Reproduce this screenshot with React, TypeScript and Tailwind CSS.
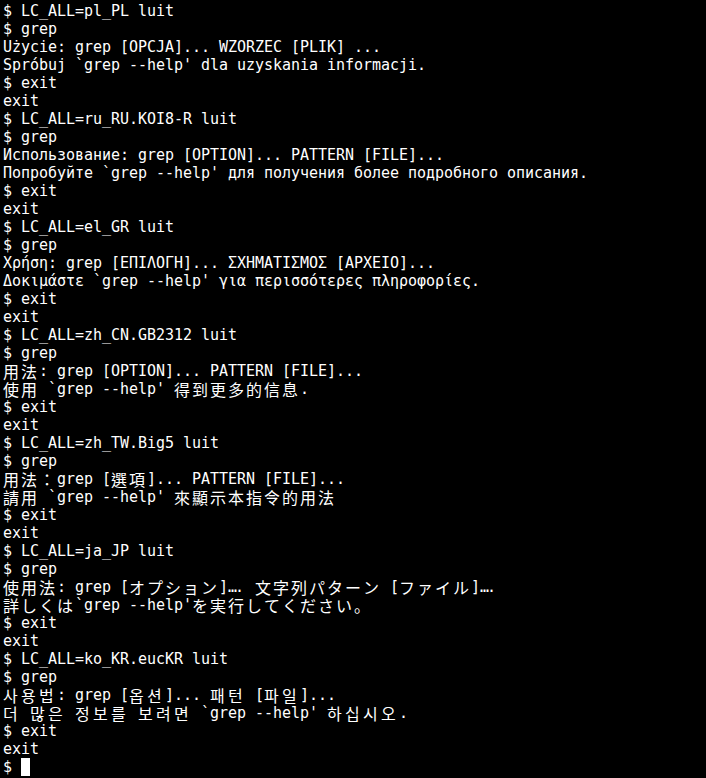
import { Fragment } from 'react';

type Lang = 'latin' | 'sc' | 'tc' | 'ja' | 'ko';

interface Line {
  text: string;
  lang?: Lang;
  cursor?: boolean;
}

const LINES: Line[] = [
  { text: '$ LC_ALL=pl_PL luit' },
  { text: '$ grep' },
  { text: 'Użycie: grep [OPCJA]... WZORZEC [PLIK] ...' },
  { text: "Spróbuj `grep --help' dla uzyskania informacji." },
  { text: '$ exit' },
  { text: 'exit' },
  { text: '$ LC_ALL=ru_RU.KOI8-R luit' },
  { text: '$ grep' },
  { text: 'Использование: grep [OPTION]... PATTERN [FILE]...' },
  { text: "Попробуйте `grep --help' для получения более подробного описания." },
  { text: '$ exit' },
  { text: 'exit' },
  { text: '$ LC_ALL=el_GR luit' },
  { text: '$ grep' },
  { text: 'Χρήση: grep [ΕΠΙΛΟΓΗ]... ΣΧΗΜΑΤΙΣΜΟΣ [ΑΡΧΕΙΟ]...' },
  { text: "Δοκιμάστε `grep --help' για περισσότερες πληροφορίες." },
  { text: '$ exit' },
  { text: 'exit' },
  { text: '$ LC_ALL=zh_CN.GB2312 luit' },
  { text: '$ grep' },
  { text: '用法: grep [OPTION]... PATTERN [FILE]...', lang: 'sc' },
  { text: "使用 `grep --help' 得到更多的信息.", lang: 'sc' },
  { text: '$ exit' },
  { text: 'exit' },
  { text: '$ LC_ALL=zh_TW.Big5 luit' },
  { text: '$ grep' },
  { text: '用法：grep [選項]... PATTERN [FILE]...', lang: 'tc' },
  { text: "請用 `grep --help' 來顯示本指令的用法", lang: 'tc' },
  { text: '$ exit' },
  { text: 'exit' },
  { text: '$ LC_ALL=ja_JP luit' },
  { text: '$ grep' },
  { text: '使用法: grep [オプション]… 文字列パターン [ファイル]…', lang: 'ja' },
  { text: "詳しくは`grep --help'を実行してください。", lang: 'ja' },
  { text: '$ exit' },
  { text: 'exit' },
  { text: '$ LC_ALL=ko_KR.eucKR luit' },
  { text: '$ grep' },
  { text: '사용법: grep [옵션]... 패턴 [파일]...', lang: 'ko' },
  { text: "더 많은 정보를 보려면 `grep --help' 하십시오.", lang: 'ko' },
  { text: '$ exit' },
  { text: 'exit' },
  { text: '$ ', cursor: true },
];

const NARROW = "block shrink-0 w-[9px] h-[18px] leading-[18px] text-[15px] whitespace-pre font-['DejaVu_Sans_Mono',monospace]";

// the ja locale draws its ellipsis two cells wide, dots on the baseline
const ELLIPSIS = "block shrink-0 w-[18px] h-[18px] leading-[18px] text-[15px] tracking-[-2px] whitespace-pre font-['DejaVu_Sans_Mono',monospace]";

const WIDE: Record<Lang, string> = {
  latin: "block shrink-0 w-[18px] h-[18px] leading-[18px] text-[16px] whitespace-pre font-['Noto_Sans_CJK_SC',sans-serif]",
  sc: "block shrink-0 w-[18px] h-[18px] leading-[18px] text-[16px] whitespace-pre font-['Noto_Sans_CJK_SC',sans-serif]",
  tc: "block shrink-0 w-[18px] h-[18px] leading-[18px] text-[16px] whitespace-pre font-['Noto_Sans_CJK_TC',sans-serif]",
  ja: "block shrink-0 w-[18px] h-[18px] leading-[18px] text-[16px] whitespace-pre font-['Noto_Sans_CJK_JP',sans-serif]",
  ko: "block shrink-0 w-[18px] h-[18px] leading-[18px] text-[16px] whitespace-pre font-['Noto_Sans_CJK_KR',sans-serif]",
};

// double-width cells, like a terminal's wcwidth
function isWide(c: number) {
  return (
    (c >= 0x1100 && c <= 0x115f) ||
    (c >= 0x2e80 && c <= 0xa4cf) ||
    (c >= 0xac00 && c <= 0xd7a3) ||
    (c >= 0xf900 && c <= 0xfaff) ||
    (c >= 0xfe30 && c <= 0xfe4f) ||
    (c >= 0xff00 && c <= 0xff60) ||
    (c >= 0xffe0 && c <= 0xffe6)
  );
}

function Cell({ ch, lang }: { ch: string; lang: Lang }) {
  const c = ch.codePointAt(0) ?? 0;
  if (c === 0x2026 && lang === 'ja') {
    return <span className={ELLIPSIS}>{'….'}</span>;
  }
  return <span className={isWide(c) ? WIDE[lang] : NARROW}>{ch}</span>;
}

function TermLine({ line }: { line: Line }) {
  const lang = line.lang ?? 'latin';
  return (
    <div className="flex h-[18px]">
      {Array.from(line.text).map((ch, i) => (
        <Cell key={i} ch={ch} lang={lang} />
      ))}
      {line.cursor && <span className="block w-[9px] h-[18px] bg-white" />}
    </div>
  );
}

export default function App() {
  return (
    <div className="w-full h-screen bg-black text-white overflow-hidden pt-[2px] pl-[3px]">
      {LINES.map((line, i) => (
        <Fragment key={i}>
          <TermLine line={line} />
        </Fragment>
      ))}
    </div>
  );
}
